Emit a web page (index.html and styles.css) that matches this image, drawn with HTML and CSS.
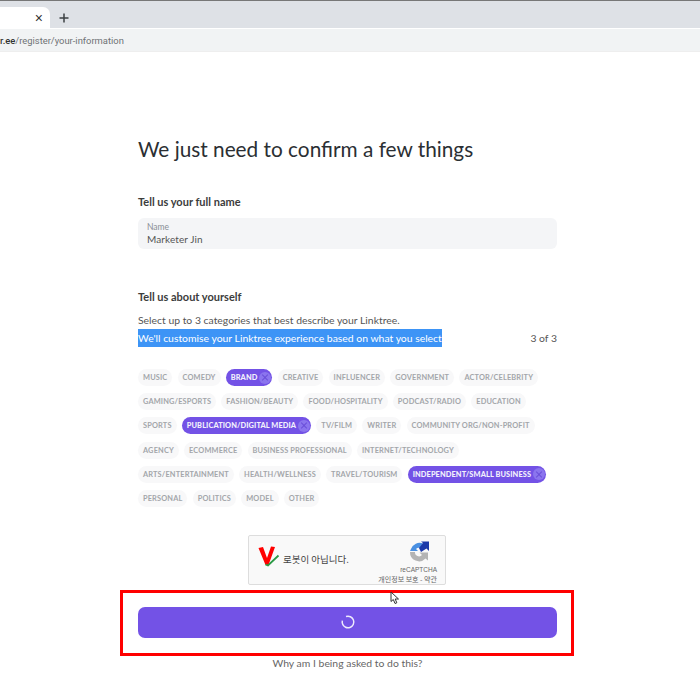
FILE: index.html
```html
<!DOCTYPE html>
<html lang="en">
  <head>
    <title>Linktree register</title>
    <meta charset="UTF-8" />
    <link rel="stylesheet" href="styles.css">
  </head>
  <body>
    <!-- browser chrome -->
    <div class="tabstrip">
      <div class="tab"><span class="tab-close">×</span></div>
      <svg class="new-tab" width="10" height="10" viewBox="0 0 10 10"><path d="M5 0.5v9M0.5 5h9" stroke="#3c4043" stroke-width="1.5"/></svg>
    </div>
    <div class="addressbar"><b>r.ee</b>/register/your-information</div>

    <main class="form">
      <h1>We just need to confirm a few things</h1>

      <h2 class="name-title">Tell us your full name</h2>
      <div class="name-field">
        <span class="name-label">Name</span>
        <span class="name-value">Marketer Jin</span>
      </div>

      <h2 class="about-title">Tell us about yourself</h2>
      <p class="hint">Select up to 3 categories that best describe your Linktree.</p>
      <div class="hint-row">
        <span class="selected-text">We'll customise your Linktree experience based on what you select</span>
        <span>3 of 3</span>
      </div>

      <div class="chips">
        <div class="chip-row">
          <span class="chip">Music</span>
          <span class="chip">Comedy</span>
          <span class="chip active">Brand<i class="chip-x"></i></span>
          <span class="chip">Creative</span>
          <span class="chip">Influencer</span>
          <span class="chip">Government</span>
          <span class="chip">Actor/Celebrity</span>
        </div>
        <div class="chip-row">
          <span class="chip">Gaming/Esports</span>
          <span class="chip">Fashion/Beauty</span>
          <span class="chip">Food/Hospitality</span>
          <span class="chip">Podcast/Radio</span>
          <span class="chip">Education</span>
        </div>
        <div class="chip-row">
          <span class="chip">Sports</span>
          <span class="chip active">Publication/Digital Media<i class="chip-x"></i></span>
          <span class="chip">TV/Film</span>
          <span class="chip">Writer</span>
          <span class="chip">Community Org/Non-Profit</span>
        </div>
        <div class="chip-row">
          <span class="chip">Agency</span>
          <span class="chip">Ecommerce</span>
          <span class="chip">Business Professional</span>
          <span class="chip">Internet/Technology</span>
        </div>
        <div class="chip-row">
          <span class="chip">Arts/Entertainment</span>
          <span class="chip">Health/Wellness</span>
          <span class="chip">Travel/Tourism</span>
          <span class="chip active">Independent/Small Business<i class="chip-x"></i></span>
        </div>
        <div class="chip-row">
          <span class="chip">Personal</span>
          <span class="chip">Politics</span>
          <span class="chip">Model</span>
          <span class="chip">Other</span>
        </div>
      </div>

      <div class="captcha">
        <svg class="captcha-check" width="22" height="21" viewBox="0 0 22 21">
          <path d="M0.500 2 L5 1 L9 12 L13 0.500 L17 1 L10.500 19 L7.500 19 Z" fill="#f00"/>
          <path d="M7.500 18.500 L10 19.500 L20.500 9.500" fill="none" stroke="#2a9a45" stroke-width="1.800"/>
        </svg>
        <span class="captcha-text">로봇이 아닙니다.</span>
        <div class="captcha-brand">
          <svg width="22" height="22" viewBox="0 0 22 22">
            <path d="M3 8 A9 9 0 0 1 15 2.500 L12 7 A4 4 0 0 0 8 8 L10 10 L2 10 Z" fill="#4a90e2"/>
            <path d="M15 2 L13 0.500 L21 0.500 L21 10 L18.500 7.500 L13 11 L11 7 Z" fill="#1c3aa9"/>
            <path d="M2 11 L7 11 A4 4 0 0 0 14 14 L11.500 11.500 L20 11.500 L20 19.500 L17.500 17.500 A9 9 0 0 1 2 11 Z" fill="#b4b4b4"/>
          </svg>
          <span class="captcha-name">reCAPTCHA</span>
          <span class="captcha-links">개인정보 보호 - 약관</span>
        </div>
      </div>

      <button class="submit">
        <svg class="spinner" width="14" height="14" viewBox="0 0 14 14">
          <circle cx="7" cy="7" r="5.800" fill="none" stroke="#eeeafc" stroke-width="1.500" stroke-dasharray="30 6.400"/>
        </svg>
      </button>
      <p class="why">Why am I being asked to do this?</p>
    </main>

    <!-- annotation and pointer lie over the page -->
    <div class="red-box"></div>
    <svg class="cursor" width="10" height="14" viewBox="0 0 10 14">
      <path d="M1 1 L1 10.500 L3.300 8.500 L5 12.500 L6.800 11.800 L5.200 8 L8.500 8 Z" fill="#fff" stroke="#333" stroke-width="1"/>
    </svg>
  </body>
</html>
```

FILE: styles.css
```css
html,
body {
  margin: 0;
  padding: 0;
  overflow: hidden;
  background: #fff;
  font-family: Lato, sans-serif;
}

/* browser chrome */
.tabstrip {
  display: flex;
  align-items: center;
  height: 28px;
  background: #dee1e6;
  border-top: 1px solid #777;
  box-sizing: border-box;
}

.tab {
  display: flex;
  align-items: center;
  justify-content: flex-end;
  width: 50px;
  height: 22px;
  margin-top: 6px;
  padding-right: 7px;
  box-sizing: border-box;
  background: #fff;
  border-radius: 0 7px 0 0;
}

.tab-close {
  font-family: "Liberation Sans", sans-serif;
  font-size: 14px;
  color: #333;
}

.new-tab {
  margin-left: 9px;
  margin-top: 6px;
}

.addressbar {
  height: 24px;
  padding-top: 1px;
  box-sizing: border-box;
  background: #f1f3f4;
  border-top: 1px solid #fff;
  border-bottom: 1px solid #eee;
  line-height: 22px;
  font-family: Roboto, sans-serif;
  font-size: 9.400px;
  color: #6f7275;
  white-space: nowrap;
}

.addressbar b {
  color: #333;
  font-weight: 500;
}

/* form */
.form {
  width: 419px;
  margin-left: 138px;
  color: #3a3f45;
}

h1 {
  margin: 84px 0 0;
  font-size: 20.800px;
  line-height: 26px;
  font-weight: 400;
  color: #2b2f33;
}

h2 {
  margin: 0;
  font-size: 11px;
  line-height: 14px;
  font-weight: 700;
  color: #3c3c3c;
}

.name-title {
  margin-top: 33px;
}

.name-field {
  display: flex;
  flex-direction: column;
  justify-content: center;
  height: 31px;
  margin-top: 9px;
  padding-left: 9px;
  background: #f4f5f7;
  border-radius: 6px;
}

.name-label {
  font-size: 8.500px;
  line-height: 11px;
  color: #8a8f96;
}

.name-value {
  font-size: 10px;
  line-height: 13px;
  letter-spacing: 0.1px;
  color: #555;
}

.about-title {
  margin-top: 41px;
}

.hint {
  margin: 9px 0 0;
  font-size: 10.400px;
  line-height: 14px;
  color: #555;
}

.hint-row {
  display: flex;
  justify-content: space-between;
  align-items: center;
  margin-top: 2px;
  font-size: 10.400px;
  line-height: 18px;
  color: #555;
}

.selected-text {
  display: block;
  background: #3d94f6;
  color: #fff;
}

.chips {
  display: flex;
  flex-direction: column;
  gap: 7.200px;
  margin-top: 22px;
}

.chip-row {
  display: flex;
  gap: 5.200px;
}

.chip {
  display: flex;
  align-items: center;
  height: 17px;
  padding: 0 5px;
  border-radius: 9px;
  background: #f8f8f9;
  color: #a3a6aa;
  font-size: 7.400px;
  font-weight: 700;
  letter-spacing: 0.15px;
  text-transform: uppercase;
  white-space: nowrap;
}

.chip.active {
  padding-right: 1px;
  background: #7352e6;
  color: #f2f0fc;
  font-weight: 900;
  letter-spacing: 0.1px;
}

.chip-x {
  position: relative;
  width: 12px;
  height: 12px;
  margin-left: 2px;
  border-radius: 50%;
  background: #8b75ee;
}

.chip-x::before,
.chip-x::after {
  content: "";
  position: absolute;
  left: 2px;
  top: 5.500px;
  width: 8px;
  height: 1px;
  background: #6a4fd8;
  transform: rotate(45deg);
}

.chip-x::after {
  transform: rotate(-45deg);
}

/* captcha */
.captcha {
  display: flex;
  align-items: center;
  width: 198px;
  height: 50px;
  margin: 28px 0 0 110px;
  padding-left: 9px;
  box-sizing: border-box;
  background: #f9f9f9;
  border: 1px solid #ddd;
  border-radius: 2px;
}

.captcha-check {
  margin-bottom: 7px;
}

.captcha-text {
  margin-left: 3px;
  margin-top: -1px;
  font-family: "Noto Sans CJK KR", sans-serif;
  font-size: 9.500px;
  color: #444;
}

.captcha-brand {
  display: flex;
  flex-direction: column;
  align-items: flex-end;
  margin-left: auto;
  margin-top: 5px;
  padding-right: 8px;
}

.captcha-brand svg {
  margin-right: 7px;
}

.captcha-name {
  margin-top: 2px;
  font-family: "Liberation Sans", sans-serif;
  font-size: 6.500px;
  line-height: 9px;
  color: #666;
}

.captcha-links {
  font-family: "Noto Sans CJK KR", sans-serif;
  font-size: 7px;
  line-height: 10px;
  color: #666;
}

/* submit */
.submit {
  display: flex;
  align-items: center;
  justify-content: center;
  width: 100%;
  height: 31px;
  margin-top: 22px;
  padding: 0;
  border: none;
  border-radius: 7px;
  background: #7352e6;
}

.spinner {
  transform: rotate(-110deg);
}

.why {
  margin: 18px 0 0;
  font-size: 10.400px;
  line-height: 14px;
  text-align: center;
  color: #666;
}

/* annotation */
.red-box {
  position: absolute;
  left: 120px;
  top: 590px;
  width: 448px;
  height: 60px;
  border: 3px solid #f00;
}

.cursor {
  position: absolute;
  left: 390px;
  top: 591px;
}
```
